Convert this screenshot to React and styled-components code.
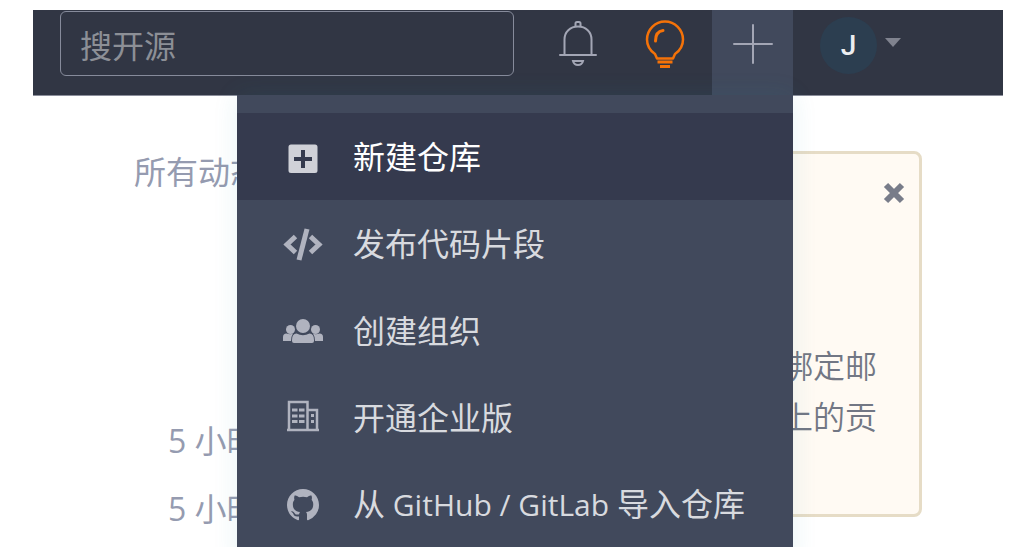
import styled, { createGlobalStyle } from "styled-components";

const GlobalStyle = createGlobalStyle`
    * {
        box-sizing: border-box;
    }
    body {
        margin: 0;
        background: #fff;
        font-family: "Open Sans", "Noto Sans CJK SC", sans-serif;
        font-size: 32px;
    }
    button, input {
        font: inherit;
    }
`;

const Screen = styled.div`
    height: 100vh;
    padding: 10px 17px 7px 33px;
    overflow: hidden;
`;

const Page = styled.div`
    height: 100%;
    overflow: hidden;
`;

const Header = styled.header`
    display: flex;
    height: 86px;
    padding-left: 27px;
    background: #313644;
    border-bottom: 1px solid #8b8e9b;
`;

const SearchForm = styled.form`
    flex: 1;
    min-width: 0;
    padding: 1px 0 18px;
    margin-right: 20px;
`;

const SearchInput = styled.input`
    display: block;
    width: 100%;
    height: 65px;
    padding: 4px 19px 0;
    color: #d5d6da;
    background: transparent;
    border: 1px solid #868b9b;
    border-radius: 6px;
    outline: none;
    &::placeholder {
        color: #8c8f96;
        opacity: 1;
    }
`;

const IconGroup = styled.div`
    display: flex;
    margin-right: 4px;
`;

const IconButton = styled.button`
    display: flex;
    align-items: center;
    justify-content: center;
    width: ${(props) => props.$width || 87}px;
    height: 85px;
    padding: 0 0 18px;
    border: 0;
    color: ${(props) => props.$color || "#a3a6b5"};
    background: ${(props) => (props.$open ? "#41495c" : "transparent")};
    cursor: pointer;
`;

const Dropdown = styled.div`
    position: relative;
`;

const Menu = styled.nav`
    position: absolute;
    z-index: 1;
    top: 85px;
    right: 0;
    width: 556px;
    padding: 18px 0;
    background: #41495c;
    box-shadow: 0 0 24px rgba(34, 150, 165, 0.11);
`;

const MenuItem = styled.a`
    display: flex;
    align-items: center;
    gap: 30px;
    height: 87px;
    padding: 0 46px;
    line-height: 48px;
    white-space: nowrap;
    text-decoration: none;
    color: ${(props) => (props.$active ? "#fff" : "#d8dadf")};
    background: ${(props) => (props.$active ? "#353a4e" : "transparent")};
    svg {
        flex: none;
        color: ${(props) => (props.$active ? "#d0d1d8" : "#b0b3bf")};
    }
`;

const Latin = styled.span`
    font-size: 30px;
`;

const UserButton = styled.button`
    display: flex;
    align-items: center;
    gap: 7px;
    height: 85px;
    padding: 0 101px 15px 27px;
    border: 0;
    background: transparent;
    cursor: pointer;
`;

const Avatar = styled.span`
    width: 57px;
    height: 57px;
    border-radius: 50%;
    background: #2c3e50;
    color: #ecedf0;
    font-family: Roboto, sans-serif;
    font-size: 28px;
    font-weight: 500;
    line-height: 57px;
    text-align: center;
`;

const Content = styled.main`
    display: flex;
    justify-content: space-between;
    padding: 55px 81px 0 101px;
`;

const Feed = styled.section`
    color: #959bb0;
    white-space: nowrap;
`;

const FeedTab = styled.a`
    display: block;
    line-height: 42px;
    color: inherit;
    text-decoration: none;
`;

const FeedList = styled.ul`
    margin: 214px 0 0;
    padding: 0 0 0 34px;
    list-style: none;
    line-height: 68px;
`;

const Notice = styled.aside`
    display: flex;
    flex-direction: column;
    align-items: flex-end;
    width: 300px;
    height: 366px;
    padding: 28px 14px;
    background: #fffaf3;
    border: 3px solid #e6dcc6;
    border-radius: 8px;
`;

const CloseButton = styled.button`
    display: flex;
    padding: 0;
    border: 0;
    color: #787c89;
    background: transparent;
    cursor: pointer;
`;

const NoticeText = styled.p`
    margin: 136px 28px 0 0;
    color: #727784;
    font-weight: 350;
    line-height: 51px;
    text-align: right;
`;

const BellIcon = () => (
    <svg width="38" height="46" viewBox="0 0 38 46" fill="none" stroke="currentColor" strokeWidth="2">
        <path d="M5.500 33V18.500C5.500 11 11 5.500 19 5.500S32.500 11 32.500 18.500V33" />
        <path d="M16.500 5.500V2.500Q16.500 1 18 1H20Q21.500 1 21.500 2.500V5.500" />
        <path d="M1 34H37" strokeLinecap="round" />
        <path d="M14 40H24Q23 44 19 44T14 40Z" />
    </svg>
);

const BulbIcon = () => (
    <svg width="40" height="48" viewBox="0 0 40 48" fill="none" stroke="currentColor" strokeWidth="2.500">
        <path d="M12 38.500L10 34Q2 28.500 2 19.500A18 18 0 0 1 38 19.500Q38 28.500 30 34L28 38.500Z" strokeLinejoin="round" />
        <path d="M10.500 21Q10.500 11.500 18 10.500" strokeWidth="3" strokeLinecap="round" />
        <path d="M12.500 42H27.500M15 46.500H25" strokeWidth="3" />
    </svg>
);

const PlusIcon = () => (
    <svg width="40" height="40" viewBox="0 0 40 40" stroke="currentColor" strokeWidth="2" strokeLinecap="round">
        <path d="M1 20H39M20 1V39" />
    </svg>
);

const CaretIcon = () => (
    <svg width="18" height="20" viewBox="0 0 18 20" fill="#80838f">
        <path d="M1 3H17L9 12Z" />
    </svg>
);

const CloseIcon = () => (
    <svg width="22" height="22" viewBox="0 0 22 22" stroke="currentColor" strokeWidth="6">
        <path d="M3 3L19 19M19 3L3 19" />
    </svg>
);

const RepoIcon = () => (
    <svg width="40" height="40" viewBox="0 0 40 40" fill="currentColor">
        <path
            fillRule="evenodd"
            d="M8 7.500H32Q34.500 7.500 34.500 10V33.500Q34.500 36 32 36H8Q5.500 36 5.500 33.500V10Q5.500 7.500 8 7.500ZM18 13V20H11V24H18V31H22V24H29V20H22V13Z"
        />
    </svg>
);

const CodeIcon = () => (
    <svg width="40" height="40" viewBox="0 0 40 40" fill="none" stroke="currentColor" strokeWidth="5">
        <path d="M12.500 12.500L4 20.500L12.500 28.500M27.500 12.500L36 20.500L27.500 28.500" />
        <path d="M24 5L16 36" />
    </svg>
);

const GroupIcon = () => (
    <svg width="40" height="40" viewBox="0 0 40 40" fill="currentColor">
        <circle cx="20" cy="15" r="7" />
        <circle cx="7.500" cy="18.500" r="4.500" />
        <circle cx="32.500" cy="18.500" r="4.500" />
        <path d="M13.500 22.500Q20 26 26.500 22.500Q31 22.500 31 29V30Q31 32 29 32H11Q9 32 9 30V29Q9 22.500 13.500 22.500Z" />
        <path d="M3.500 22.500Q7.500 24 10 22.500Q8 25.500 8 30H0V26Q0 22.500 3.500 22.500Z" />
        <path d="M36.500 22.500Q32.500 24 30 22.500Q32 25.500 32 30H40V26Q40 22.500 36.500 22.500Z" />
    </svg>
);

const CompanyIcon = () => (
    <svg width="40" height="40" viewBox="0 0 40 40" fill="none" stroke="currentColor" strokeWidth="2.500">
        <path d="M4 32H36M6 32V4H24.500V32M24.500 12H34V32" />
        <path d="M9 12H14.500M16 12H21.500M9 18H14.500M16 18H21.500M9 23.500H14.500M16 23.500H21.500" strokeWidth="3" />
        <path d="M28 17.500H31M28 23.500H31" strokeWidth="3" />
    </svg>
);

const GithubIcon = () => (
    <svg width="40" height="40" viewBox="-2 -2 20 20" fill="currentColor">
        <path d="M8 0C3.580 0 0 3.580 0 8c0 3.540 2.290 6.530 5.470 7.590.4.070.55-.17.55-.38 0-.19-.01-.82-.01-1.490-2.010.37-2.530-.49-2.690-.94-.09-.23-.48-.94-.82-1.130-.28-.15-.68-.52-.01-.53.63-.01 1.080.58 1.230.82.72 1.210 1.870.87 2.330.66.07-.52.28-.87.51-1.070-1.780-.2-3.640-.89-3.640-3.950 0-.87.31-1.590.82-2.150-.08-.2-.36-1.020.08-2.120 0 0 .67-.21 2.200.82.64-.18 1.320-.27 2-.27s1.360.09 2 .27c1.530-1.040 2.200-.82 2.200-.82.44 1.100.16 1.920.08 2.120.51.56.82 1.270.82 2.150 0 3.070-1.870 3.750-3.650 3.950.29.25.54.73.54 1.480 0 1.070-.01 1.930-.01 2.200 0 .21.15.46.55.38A8.010 8.010 0 0 0 16 8c0-4.420-3.580-8-8-8z" />
    </svg>
);

const menuItems = [
    { id: "repo", label: "新建仓库", Icon: RepoIcon, active: true },
    { id: "snippet", label: "发布代码片段", Icon: CodeIcon },
    { id: "group", label: "创建组织", Icon: GroupIcon },
    { id: "company", label: "开通企业版", Icon: CompanyIcon },
    { id: "import", label: <>从<Latin> GitHub / GitLab </Latin>导入仓库</>, Icon: GithubIcon },
];

const App = () => {
    return (
        <Screen>
            <GlobalStyle />
            <Page>
                <Header>
                    <SearchForm role="search">
                        <SearchInput type="text" placeholder="搜开源" aria-label="搜开源" />
                    </SearchForm>
                    <IconGroup>
                        <IconButton type="button" aria-label="通知"><BellIcon /></IconButton>
                        <IconButton type="button" aria-label="建议" $color="#f57208"><BulbIcon /></IconButton>
                    </IconGroup>
                    <Dropdown>
                        <IconButton type="button" aria-label="新建" aria-expanded="true" $width={81} $open><PlusIcon /></IconButton>
                        <Menu>
                            {menuItems.map(({ id, label, Icon, active }) => (
                                <MenuItem href="#" key={id} $active={active}>
                                    <Icon />
                                    <span>{label}</span>
                                </MenuItem>
                            ))}
                        </Menu>
                    </Dropdown>
                    <UserButton type="button">
                        <Avatar>J</Avatar>
                        <CaretIcon />
                    </UserButton>
                </Header>
                <Content>
                    <Feed>
                        <FeedTab href="#">所有动态</FeedTab>
                        <FeedList>
                            <li>5 小时</li>
                            <li>5 小时</li>
                        </FeedList>
                    </Feed>
                    <Notice>
                        <CloseButton type="button" aria-label="关闭"><CloseIcon /></CloseButton>
                        <NoticeText>绑定邮<br />上的贡</NoticeText>
                    </Notice>
                </Content>
            </Page>
        </Screen>
    );
};

export default App;
